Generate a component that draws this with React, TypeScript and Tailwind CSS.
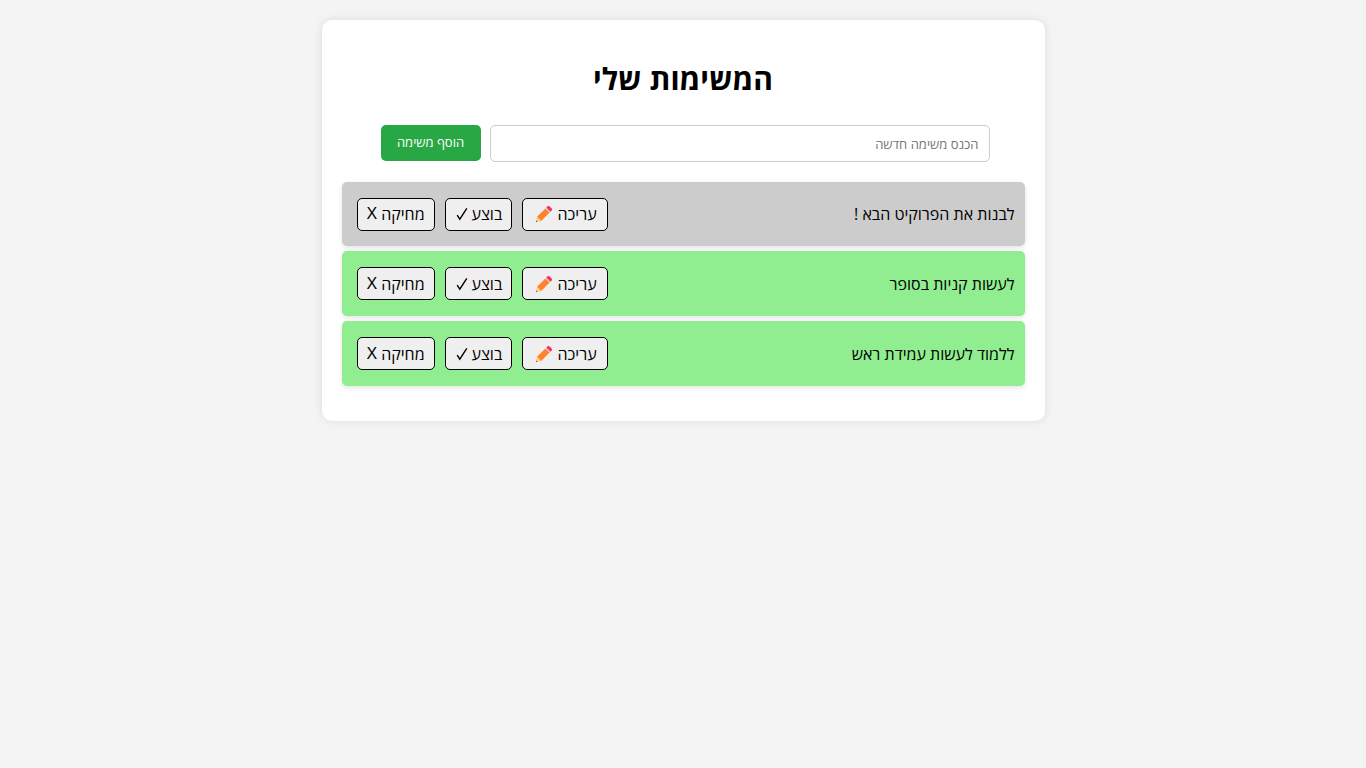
import { useState } from "react";

type Task = { id: number; title: string; done: boolean };

const initialTasks: Task[] = [
  { id: 1, title: "לבנות את הפרוקיט הבא !", done: true },
  { id: 2, title: "לעשות קניות בסופר", done: false },
  { id: 3, title: "ללמוד לעשות עמידת ראש", done: false },
];

const actionClass =
  "flex h-[33px] items-center justify-end gap-1 rounded-[5px] border border-black bg-[#efefef] text-base text-black";

function Pencil() {
  return (
    <svg viewBox="0 0 20 20" className="size-5" aria-hidden="true">
      <path d="M1.8 18.2 L3 12.8 L7.2 17 Z" fill="#ffce7c" />
      <path d="M1.8 18.2 L2.2 16.6 L3.4 17.8 Z" fill="#7d4533" />
      <path d="M3 12.8 L11.4 4.4 L15.6 8.6 L7.2 17 Z" fill="#ff822d" />
      <path d="M11.4 4.4 L12.3 3.5 L16.5 7.7 L15.6 8.6 Z" fill="#d3d3d3" />
      <path d="M12.3 3.5 L13.5 2.3 Q14.5 1.5 15.5 2.3 L17.7 4.5 Q18.5 5.5 17.7 6.5 L16.5 7.7 Z" fill="#f92f60" />
    </svg>
  );
}

function Check() {
  return (
    <svg viewBox="0 0 12 14" className="h-3.5 w-3" fill="none" stroke="currentColor" aria-hidden="true">
      <path d="M1.2 8.2 L3.8 12.2 L10.8 1.4" strokeWidth="1.4" />
    </svg>
  );
}

export default function App() {
  const [tasks, setTasks] = useState(initialTasks);
  const [text, setText] = useState("");

  const addTask = () => {
    if (!text.trim()) return;
    setTasks([...tasks, { id: Date.now(), title: text, done: false }]);
    setText("");
  };

  return (
    <div
      dir="rtl"
      className="min-h-screen bg-[#f4f4f4] p-5 font-['Open_Sans','Noto_Sans',sans-serif] text-base text-black"
    >
      <main className="mx-auto max-w-[723px] rounded-[10px] bg-white px-5 pt-9 pb-[35px] shadow-[0_0_10px_rgba(0,0,0,0.1)]">
        <h1 className="mb-6 text-center text-[30px] leading-[45px] font-bold">המשימות שלי</h1>
        <form
          className="mb-5 flex justify-center gap-[9px] pl-1"
          onSubmit={(e) => {
            e.preventDefault();
            addTask();
          }}
        >
          <input
            aria-label="משימה חדשה"
            placeholder="הכנס משימה חדשה"
            value={text}
            onChange={(e) => setText(e.target.value)}
            className="h-[37px] w-[500px] min-w-0 rounded-[5px] border border-[#ccc] bg-white px-2.5 text-[13px] placeholder:text-[#757575]"
          />
          <button className="h-9 w-[100px] rounded-[5px] bg-[#28a745] text-[13px] font-medium text-white">
            הוסף משימה
          </button>
        </form>
        <ul className="flex flex-col gap-[5px]">
          {tasks.map((task) => (
            <li
              key={task.id}
              className={
                "flex items-center justify-between rounded-[5px] pr-2.5 pl-[15px] shadow-[0_2px_5px_rgba(0,0,0,0.1)] " +
                (task.done ? "min-h-16 bg-[#ccc]" : "min-h-[65px] bg-[#90ee90]")
              }
            >
              <span>{task.title}</span>
              <div className="flex gap-2.5">
                <button className={actionClass + " w-[86px] pl-[11px]"}>
                  <span>עריכה</span>
                  <Pencil />
                </button>
                <button
                  className={actionClass + " w-[67px] pl-2.5"}
                  onClick={() => setTasks(tasks.map((t) => (t.id === task.id ? { ...t, done: !t.done } : t)))}
                >
                  <span>בוצע</span>
                  <Check />
                </button>
                <button
                  className={actionClass + " w-[78px] pl-[9px]"}
                  onClick={() => setTasks(tasks.filter((t) => t.id !== task.id))}
                >
                  <span>מחיקה</span>
                  <span className="font-['Liberation_Sans',Arial,sans-serif]">X</span>
                </button>
              </div>
            </li>
          ))}
        </ul>
      </main>
    </div>
  );
}
